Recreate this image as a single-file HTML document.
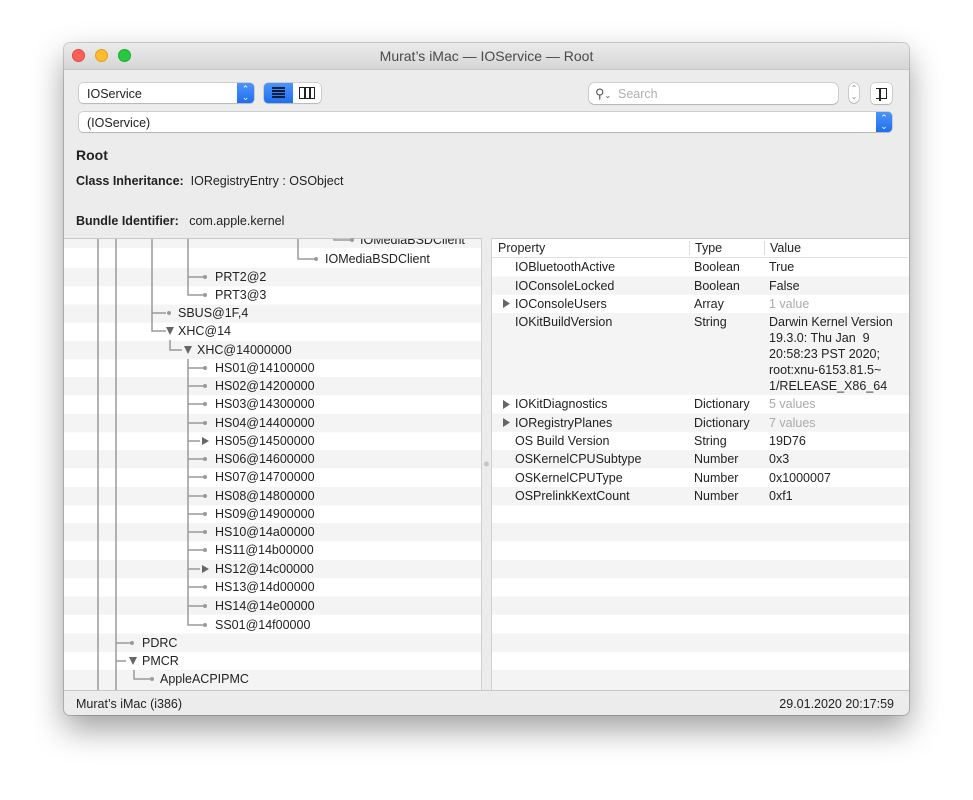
<!DOCTYPE html>
<html><head><meta charset="utf-8"><style>
*{margin:0;padding:0;box-sizing:border-box}
body{width:973px;height:800px;background:#fff;position:relative;overflow:hidden;font-family:"Liberation Sans",sans-serif;color:#222}
.win{position:absolute;left:64px;top:43px;width:845px;height:672px;border-radius:6px;background:#ececec;box-shadow:0 14px 32px rgba(0,0,0,.38),0 0 0 1px rgba(0,0,0,.18);overflow:hidden}
.t{position:absolute;font-size:12.5px;line-height:16px;white-space:nowrap;color:#222}
.g{color:#aaa}
.b{font-weight:bold}
.ctl{position:absolute;background:#fff;border-radius:4px;box-shadow:0 0 0 .5px rgba(0,0,0,.25),0 1px 1px rgba(0,0,0,.12)}
.blue{position:absolute;background:linear-gradient(#4d94f9,#1e6ef0);}
svg{position:absolute;left:0;top:0}
</style></head><body>
<div class="win"></div>
<div style="position:absolute;left:64px;top:43px;width:845px;height:27px;border-radius:6px 6px 0 0;background:linear-gradient(#ebebeb,#d6d6d6);border-bottom:1px solid #c8c8c8"></div>
<div style="position:absolute;left:72px;top:49px;width:13px;height:13px;border-radius:50%;background:#fc5f57;border:.5px solid #de4a42"></div>
<div style="position:absolute;left:95px;top:49px;width:13px;height:13px;border-radius:50%;background:#fdbc2e;border:.5px solid #dea123"></div>
<div style="position:absolute;left:118px;top:49px;width:13px;height:13px;border-radius:50%;background:#28c840;border:.5px solid #1aab2e"></div>
<div class="t" style="left:0;width:973px;text-align:center;top:48px;font-size:14px;color:#4a4a4a;line-height:17px">Murat’s iMac — IOService — Root</div>

<div class="ctl" style="left:79px;top:83px;width:175px;height:20px"></div>
<div class="blue" style="left:237px;top:83px;width:17px;height:20px;border-radius:0 4px 4px 0"></div>
<div class="t" style="left:237px;top:85px;width:17px;text-align:center;color:#fff;font-size:9px;line-height:8px">⌃<br>⌄</div>
<div class="t" style="left:87px;top:86px">IOService</div>
<div class="ctl" style="left:264px;top:83px;width:57px;height:20px"></div>
<div class="blue" style="left:264px;top:83px;width:29px;height:20px;border-radius:4px 0 0 4px"></div>
<div style="position:absolute;left:272px;top:87px;width:13px;height:2px;background:#0a1d3a;box-shadow:0 3px 0 #0a1d3a,0 6px 0 #0a1d3a,0 9px 0 #0a1d3a"></div>
<div style="position:absolute;left:299px;top:87px;width:16px;height:12px;border:1.5px solid #222"></div>
<div style="position:absolute;left:304px;top:87px;width:1.5px;height:12px;background:#222"></div>
<div style="position:absolute;left:309px;top:87px;width:1.5px;height:12px;background:#222"></div>

<div class="ctl" style="left:589px;top:83px;width:249px;height:21px;border-radius:5px"></div>
<div class="t" style="left:595px;top:86px;color:#555;font-size:13px">⚲<span style="font-size:8px">⌄</span></div>
<div class="t" style="left:618px;top:86px;color:#b0b0b0">Search</div>
<div class="ctl" style="left:849px;top:83px;width:10px;height:20px;border-radius:5px"></div>
<div class="t" style="left:849px;top:85px;width:10px;text-align:center;color:#888;font-size:8px;line-height:8px">⌃<br>⌄</div>
<div class="ctl" style="left:871px;top:83px;width:21px;height:21px"></div>
<div style="position:absolute;left:876px;top:88px;width:11px;height:11px;border:1.5px solid #222;border-left:none"></div>
<div style="position:absolute;left:879px;top:88px;width:1.5px;height:13px;background:#222"></div>

<div class="ctl" style="left:79px;top:112px;width:813px;height:20px"></div>
<div class="blue" style="left:876px;top:112px;width:16px;height:20px;border-radius:0 4px 4px 0"></div>
<div class="t" style="left:876px;top:114px;width:16px;text-align:center;color:#fff;font-size:9px;line-height:8px">⌃<br>⌄</div>
<div class="t" style="left:87px;top:115px">(IOService)</div>

<div class="t b" style="left:76px;top:146px;font-size:14px;line-height:18px">Root</div>
<div class="t" style="left:76px;top:173px"><b>Class Inheritance:</b>&nbsp; IORegistryEntry : OSObject</div>
<div class="t" style="left:76px;top:213px"><b>Bundle Identifier:</b>&nbsp;&nbsp; com.apple.kernel</div>

<svg width="973" height="800">
<rect x="64" y="238" width="845" height="452" fill="#fff"/>
<line x1="64" y1="238.5" x2="909" y2="238.5" stroke="#c8c8c8"/>
<rect x="481" y="238" width="11" height="452" fill="#ececec"/>
<line x1="481.5" y1="238" x2="481.5" y2="690" stroke="#d0d0d0"/>
<line x1="491.5" y1="238" x2="491.5" y2="690" stroke="#d0d0d0"/>
<circle cx="486.5" cy="464" r="2.5" fill="#c4c4c4"/>
<g fill="#f4f4f4">
<rect x="64" y="239" width="417" height="9"/>
<rect x="64" y="268" width="417" height="18.3"/>
<rect x="64" y="304.5" width="417" height="18.3"/>
<rect x="64" y="341" width="417" height="18.3"/>
<rect x="64" y="377" width="417" height="18.3"/>
<rect x="64" y="414" width="417" height="18.3"/>
<rect x="64" y="450" width="417" height="18.3"/>
<rect x="64" y="487" width="417" height="18.3"/>
<rect x="64" y="523" width="417" height="18.3"/>
<rect x="64" y="560" width="417" height="18.3"/>
<rect x="64" y="596.5" width="417" height="18.3"/>
<rect x="64" y="633.5" width="417" height="18.3"/>
<rect x="64" y="670" width="417" height="20"/>
<rect x="492" y="276.5" width="417" height="18.3"/>
<rect x="492" y="313" width="417" height="82"/>
<rect x="492" y="413.5" width="417" height="18.3"/>
<rect x="492" y="450" width="417" height="18.3"/>
<rect x="492" y="487" width="417" height="18.3"/>
<rect x="492" y="523" width="417" height="18.3"/>
<rect x="492" y="560" width="417" height="18.3"/>
<rect x="492" y="596.5" width="417" height="18.3"/>
<rect x="492" y="633.5" width="417" height="18.3"/>
<rect x="492" y="670" width="417" height="20"/>
</g>
<line x1="492" y1="257.5" x2="908" y2="257.5" stroke="#e0e0e0"/>
<line x1="689.5" y1="241" x2="689.5" y2="255" stroke="#ddd"/>
<line x1="764.5" y1="241" x2="764.5" y2="255" stroke="#ddd"/>
<g stroke="#9a9a9a" stroke-width="1.5" fill="none">
<path d="M98 239V690M116 239V690M152 239V331H166M188 239V295H204M188 277H204M152 313H166M298 239V259H314M334 239V240H352"/>
<path d="M170 340V350H182M188 359V625H204"/>
<path d="M188 368H204M188 386H204M188 404H204M188 423H204M188 459H204M188 477H204M188 496H204M188 514H204M188 532H204M188 550H204M188 587H204M188 606H204M188 441H200M188 569H200"/>
<path d="M116 643H130M116 661H126M134 670V679H150"/>
</g>
<g fill="#9a9a9a">
<circle cx="316" cy="259" r="2"/><circle cx="352" cy="240" r="2"/>
<circle cx="205" cy="277" r="2"/><circle cx="205" cy="295" r="2"/><circle cx="169" cy="313" r="2"/>
<circle cx="205" cy="368" r="2"/><circle cx="205" cy="386" r="2"/><circle cx="205" cy="404" r="2"/><circle cx="205" cy="423" r="2"/><circle cx="205" cy="459" r="2"/><circle cx="205" cy="477" r="2"/><circle cx="205" cy="496" r="2"/><circle cx="205" cy="514" r="2"/><circle cx="205" cy="532" r="2"/><circle cx="205" cy="550" r="2"/><circle cx="205" cy="587" r="2"/><circle cx="205" cy="606" r="2"/><circle cx="205" cy="625" r="2"/>
<circle cx="132" cy="643" r="2"/><circle cx="152" cy="679" r="2"/>
</g>
<g fill="#666">
<path d="M166 327h8l-4 8z"/><path d="M184 346h8l-4 8z"/><path d="M129 657h8l-4 8z"/>
<path d="M202 437v8l7-4z"/><path d="M202 565v8l7-4z"/>
<path d="M503 299v9l7-4.5z"/><path d="M503 400v9l7-4.5z"/><path d="M503 418v9l7-4.5z"/>
</g>
<line x1="64" y1="690.5" x2="909" y2="690.5" stroke="#c8c8c8"/>
</svg>

<div style="position:absolute;left:64px;top:239px;width:417px;height:451px;overflow:hidden">
<div class="t" style="left:296px;top:-7px">IOMediaBSDClient</div>
</div>
<div class="t" style="left:325px;top:251px">IOMediaBSDClient</div>
<div class="t" style="left:215px;top:269px">PRT2@2</div>
<div class="t" style="left:215px;top:287px">PRT3@3</div>
<div class="t" style="left:178px;top:305px">SBUS@1F,4</div>
<div class="t" style="left:178px;top:323px">XHC@14</div>
<div class="t" style="left:197px;top:342px">XHC@14000000</div>
<div class="t" style="left:215px;top:360px">HS01@14100000</div>
<div class="t" style="left:215px;top:378px">HS02@14200000</div>
<div class="t" style="left:215px;top:396px">HS03@14300000</div>
<div class="t" style="left:215px;top:415px">HS04@14400000</div>
<div class="t" style="left:215px;top:433px">HS05@14500000</div>
<div class="t" style="left:215px;top:451px">HS06@14600000</div>
<div class="t" style="left:215px;top:469px">HS07@14700000</div>
<div class="t" style="left:215px;top:488px">HS08@14800000</div>
<div class="t" style="left:215px;top:506px">HS09@14900000</div>
<div class="t" style="left:215px;top:524px">HS10@14a00000</div>
<div class="t" style="left:215px;top:542px">HS11@14b00000</div>
<div class="t" style="left:215px;top:561px">HS12@14c00000</div>
<div class="t" style="left:215px;top:579px">HS13@14d00000</div>
<div class="t" style="left:215px;top:598px">HS14@14e00000</div>
<div class="t" style="left:215px;top:617px">SS01@14f00000</div>
<div class="t" style="left:142px;top:635px">PDRC</div>
<div class="t" style="left:142px;top:653px">PMCR</div>
<div class="t" style="left:160px;top:671px">AppleACPIPMC</div>

<div class="t" style="left:498px;top:240px">Property</div>
<div class="t" style="left:695px;top:240px">Type</div>
<div class="t" style="left:770px;top:240px">Value</div>
<div class="t" style="left:515px;top:259px">IOBluetoothActive</div><div class="t" style="left:694px;top:259px">Boolean</div><div class="t" style="left:769px;top:259px">True</div>
<div class="t" style="left:515px;top:278px">IOConsoleLocked</div><div class="t" style="left:694px;top:278px">Boolean</div><div class="t" style="left:769px;top:278px">False</div>
<div class="t" style="left:515px;top:296px">IOConsoleUsers</div><div class="t" style="left:694px;top:296px">Array</div><div class="t g" style="left:769px;top:296px">1 value</div>
<div class="t" style="left:515px;top:314px">IOKitBuildVersion</div><div class="t" style="left:694px;top:314px">String</div>
<div class="t" style="left:769px;top:314px;line-height:16px">Darwin Kernel Version<br>19.3.0: Thu Jan &nbsp;9<br>20:58:23 PST 2020;<br>root:xnu-6153.81.5~<br>1/RELEASE_X86_64</div>
<div class="t" style="left:515px;top:396px">IOKitDiagnostics</div><div class="t" style="left:694px;top:396px">Dictionary</div><div class="t g" style="left:769px;top:396px">5 values</div>
<div class="t" style="left:515px;top:415px">IORegistryPlanes</div><div class="t" style="left:694px;top:415px">Dictionary</div><div class="t g" style="left:769px;top:415px">7 values</div>
<div class="t" style="left:515px;top:433px">OS Build Version</div><div class="t" style="left:694px;top:433px">String</div><div class="t" style="left:769px;top:433px">19D76</div>
<div class="t" style="left:515px;top:451px">OSKernelCPUSubtype</div><div class="t" style="left:694px;top:451px">Number</div><div class="t" style="left:769px;top:451px">0x3</div>
<div class="t" style="left:515px;top:470px">OSKernelCPUType</div><div class="t" style="left:694px;top:470px">Number</div><div class="t" style="left:769px;top:470px">0x1000007</div>
<div class="t" style="left:515px;top:488px">OSPrelinkKextCount</div><div class="t" style="left:694px;top:488px">Number</div><div class="t" style="left:769px;top:488px">0xf1</div>

<div class="t" style="left:76px;top:696px">Murat’s iMac (i386)</div>
<div class="t" style="left:700px;width:194px;text-align:right;top:696px">29.01.2020 20:17:59</div>
</body></html>
